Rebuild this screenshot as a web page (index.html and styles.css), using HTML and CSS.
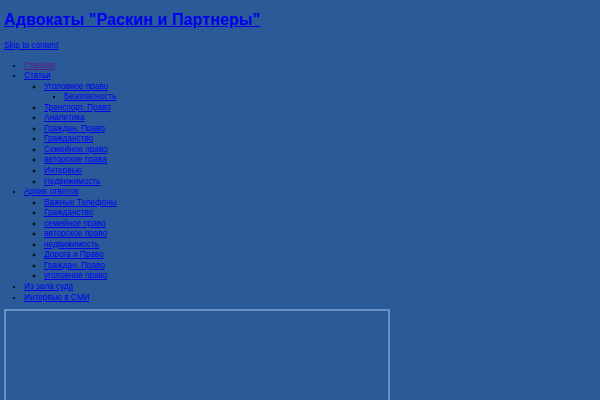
FILE: index.html
```html
<!DOCTYPE html>
<html lang="ru">
<head>
<meta charset="utf-8">
<title>Адвокаты "Раскин и Партнеры"</title>
<link rel="stylesheet" href="styles.css">
</head>
<body>
<header class="site-header">
  <h1 class="site-title"><a href="#">Адвокаты "Раскин и Партнеры"</a></h1>
  <a class="skip" href="#content">Skip to content</a>
</header>
<nav class="menu">
  <ul class="lvl1">
    <li><a class="visited" href="#">Главная</a></li>
    <li><a href="#">Статьи</a>
      <ul class="lvl2">
        <li><a href="#">Уголовное право</a>
          <ul class="lvl3">
            <li><a href="#">Безопасность</a></li>
          </ul>
        </li>
        <li><a href="#">Транспорт. Право</a></li>
        <li><a href="#">Аналитика</a></li>
        <li><a href="#">Граждан. Право</a></li>
        <li><a href="#">Гражданство</a></li>
        <li><a href="#">Семейное право</a></li>
        <li><a href="#">авторские права</a></li>
        <li><a href="#">Интервью</a></li>
        <li><a href="#">Недвижимость</a></li>
      </ul>
    </li>
    <li><a href="#">Архив ответов</a>
      <ul class="lvl2">
        <li><a href="#">Важные Телефоны</a></li>
        <li><a href="#">Гражданство</a></li>
        <li><a href="#">семейное право</a></li>
        <li><a href="#">авторское право</a></li>
        <li><a href="#">недвижимость</a></li>
        <li><a href="#">Дорога и Право</a></li>
        <li><a href="#">Граждан. Право</a></li>
        <li><a href="#">уголовное право</a></li>
      </ul>
    </li>
    <li><a href="#">Из зала суда</a></li>
    <li><a href="#">Интервью в СМИ</a></li>
  </ul>
</nav>
<main id="content" class="content-box"></main>
</body>
</html>
```
FILE: styles.css
```css
html, body {
  background: #2a5a97;
}
body {
  margin: 4px;
  font-family: "Liberation Sans", Arial, sans-serif;
  font-size: 8.2px;
  line-height: 10.55px;
  color: #000;
}
a {
  color: #0000ee;
}
a.visited {
  color: #551a8b;
}
.site-header {
  display: flex;
  flex-direction: column;
  align-items: flex-start;
}
.site-title {
  margin: 6px 0 11px;
  font-size: 16px;
  line-height: 20px;
  font-weight: bold;
  letter-spacing: 0.1px;
}
.skip {
  display: inline-block;
}
.menu ul {
  margin: 0;
  padding-left: 20px;
}
.lvl1 {
  margin-top: 9px !important;
  margin-bottom: 6px !important;
  list-style: disc;
}
.lvl2 {
  list-style: circle;
}
.lvl3 {
  list-style: square;
}
.content-box {
  display: block;
  width: 386px;
  height: 200px;
  border: 2px solid #6a90c2;
  box-sizing: border-box;
}
```
